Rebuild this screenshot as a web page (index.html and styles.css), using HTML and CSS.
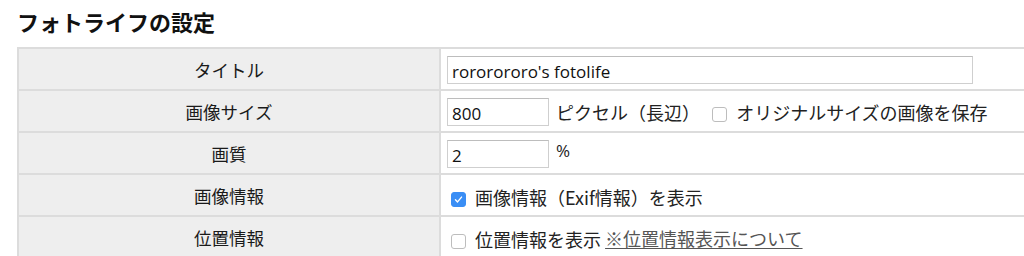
FILE: index.html
```html
<!DOCTYPE html>
<html lang="ja">
<head>
  <meta charset="UTF-8">
  <title>フォトライフの設定</title>
  <link rel="stylesheet" href="styles.css">
</head>
<body>

<h2>フォトライフの設定</h2>

<table class="settings">
  <tbody>
    <tr>
      <th>タイトル</th>
      <td><input type="text" class="text-long" value="rororororo's fotolife"></td>
    </tr>
    <tr>
      <th>画像サイズ</th>
      <td>
        <input type="text" class="text-short" value="800">
        <span class="unit">ピクセル（長辺）</span>
        <label class="check"><input type="checkbox"> オリジナルサイズの画像を保存</label>
      </td>
    </tr>
    <tr>
      <th>画質</th>
      <td>
        <input type="text" class="text-short" value="2">
        <span class="unit unit-top">%</span>
      </td>
    </tr>
    <tr>
      <th>画像情報</th>
      <td><label class="check"><input type="checkbox" checked> 画像情報（Exif情報）を表示</label></td>
    </tr>
    <tr>
      <th>位置情報</th>
      <td><label class="check"><input type="checkbox"> 位置情報を表示</label> <a href="#">※位置情報表示について</a></td>
    </tr>
  </tbody>
</table>

</body>
</html>
```

FILE: styles.css
```css
* {
  box-sizing: border-box;
}

html, body {
  overflow: hidden;
}

body {
  margin: 0;
  padding: 0 17px;
  font-family: "Noto Sans CJK JP", "Liberation Sans", sans-serif;
  color: #222;
  background: #fff;
}

h2 {
  margin: 0;
  padding-top: 5px;
  height: 47px;
  font-size: 22px;
  line-height: 32px;
  font-weight: bold;
  color: #111;
}

.settings {
  width: 1100px;
  border-collapse: collapse;
  table-layout: fixed;
}

.settings th,
.settings td {
  height: 42px;
  border: 2px solid #dcdcdc;
  font-size: 17.5px;
  padding: 0 6px;
  vertical-align: middle;
}

.settings th {
  width: 422px;
  background-color: #eeeeee;
  font-weight: normal;
  text-align: center;
  color: #1a1a1a;
}

.settings td {
  font-size: 18px;
  text-align: left;
  white-space: nowrap;
}

input[type="text"] {
  height: 28px;
  padding: 2px 4px 0;
  border: 1px solid #cfcfcf;
  border-top-color: #bdbdbd;
  font-family: "Open Sans", "Liberation Sans", sans-serif;
  font-size: 17px;
  color: #111;
  vertical-align: middle;
}

.text-long {
  width: 526px;
}

.text-short {
  width: 102px;
}

.unit {
  margin-left: 3px;
  vertical-align: middle;
}

.unit-top {
  position: relative;
  top: -4px;
  font-family: "Open Sans", sans-serif;
  font-size: 17px;
}

.check {
  margin-left: 4px;
  vertical-align: middle;
}

.settings td .unit + .check {
  margin-left: 8px;
}

input[type="checkbox"] {
  -webkit-appearance: none;
  appearance: none;
  width: 15px;
  height: 15px;
  margin: 0 5px 0 0;
  border: 1px solid #bdbdbd;
  border-radius: 3px;
  background: #fff;
  vertical-align: -2px;
}

input[type="checkbox"]:checked {
  border-color: #3a8ef5;
  background: #3a8ef5 url("data:image/svg+xml;utf8,<svg xmlns='http://www.w3.org/2000/svg' viewBox='0 0 15 15'><path d='M4 7.8l2.4 2.5 4.6-5.6' fill='none' stroke='white' stroke-width='1.6' stroke-linecap='round' stroke-linejoin='round'/></svg>") no-repeat center;
}

a {
  color: #555;
  text-decoration: underline;
  vertical-align: middle;
}
```
